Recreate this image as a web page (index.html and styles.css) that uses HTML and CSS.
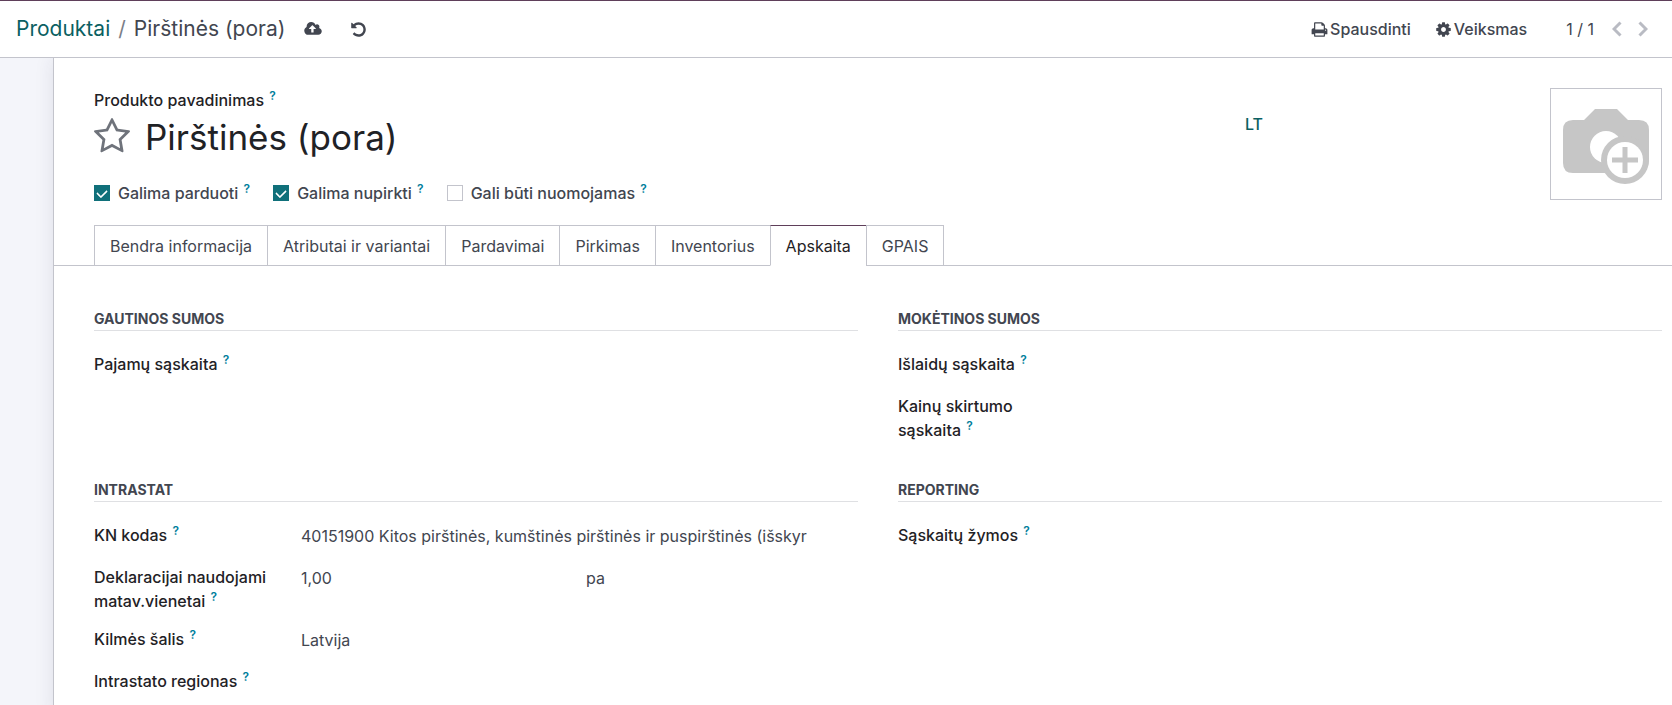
FILE: index.html
```html
<!DOCTYPE html>
<html lang="lt">
<head>
<meta charset="utf-8">
<meta name="viewport" content="width=device-width, initial-scale=1">
<title>Pirštinės (pora)</title>
<link rel="stylesheet" href="styles.css">
</head>
<body>
<header class="control-panel">
  <nav class="breadcrumb">
    <a href="#">Produktai</a>
    <span class="separator">/</span>
    <span>Pirštinės (pora)</span>
  </nav>
  <div class="record-status">
    <button type="button" class="icon-button" aria-label="Išsaugoti">
      <svg class="icon-cloud" viewBox="-64 128 1920 1536"><path d="M1216 864q0-14-9-23l-352-352q-9-9-23-9t-23 9l-351 351q-10 12-10 24 0 14 9 23t23 9h224v352q0 13 9.500 22.500t22.500 9.500h192q13 0 22.500-9.500t9.500-22.500v-352h224q13 0 22.500-9.500t9.500-22.500zm640 288q0 159-112.500 271.500t-271.500 112.500h-1088q-185 0-316.500-131.500t-131.500-316.500q0-130 70-240t188-165q-2-30-2-43 0-212 150-362t362-150q156 0 285.500 87t188.500 231q71-62 166-62 106 0 181 75t75 181q0 76-41 138 130 31 213.500 135.500t83.500 238.500z"/></svg>
    </button>
    <button type="button" class="icon-button" aria-label="Atmesti">
      <svg class="icon" viewBox="0 0 1792 1792"><path d="M1664 896q0 156-61 298t-164 245-245 164-298 61q-172 0-327-72.500t-264-204.500q-7-10-6.500-22.500t8.500-20.500l137-138q10-9 25-9 16 2 23 12 73 95 179 147t225 52q104 0 198.500-40.500t163.500-109.500 109.500-163.500 40.500-198.500-40.500-198.500-109.500-163.500-163.500-109.500-198.500-40.500q-98 0-188 35.500t-160 101.500l137 138q31 30 14 69-17 40-59 40h-448q-26 0-45-19t-19-45v-448q0-42 40-59 39-17 69 14l130 129q107-101 244.500-156.500t284.500-55.500q156 0 298 61t245 164 164 245 61 298z"/></svg>
    </button>
  </div>
  <div class="actions">
    <button type="button" class="action">
      <svg class="icon" viewBox="0 0 1792 1792"><path d="M448 1536h896v-256h-896v256zm0-640h896v-384h-160q-40 0-68-28t-28-68v-160h-640v640zm1152 64q0-26-19-45t-45-19-45 19-19 45 19 45 45 19 45-19 19-45zm128 0v416q0 13-9.500 22.500t-22.500 9.500h-224v160q0 40-28 68t-68 28h-960q-40 0-68-28t-28-68v-160h-224q-13 0-22.500-9.500t-9.500-22.500v-416q0-79 56.500-135.500t135.500-56.500h64v-544q0-40 28-68t68-28h672q40 0 88 20t76 48l152 152q28 28 48 76t20 88v256h64q79 0 135.500 56.500t56.500 135.500z"/></svg>
      Spausdinti
    </button>
    <button type="button" class="action">
      <svg class="icon" viewBox="0 0 1792 1792"><path d="M1152 896q0-106-75-181t-181-75-181 75-75 181 75 181 181 75 181-75 75-181zm512-109v222q0 12-8 23t-20 13l-185 28q-19 54-39 91 35 50 107 138 10 12 10 25t-9 23q-27 37-99 108t-94 71q-12 0-26-9l-138-108q-44 23-91 38-16 136-29 186-7 28-36 28h-222q-14 0-24.500-8.500t-11.500-21.500l-28-184q-49-16-90-37l-141 107q-10 9-25 9-14 0-25-11-126-114-165-168-7-10-7-23 0-12 8-23 15-21 51-66.500t54-70.500q-27-50-41-99l-183-27q-13-2-21-12.500t-8-23.500v-222q0-12 8-23t19-13l186-28q14-46 39-92-40-57-107-138-10-12-10-24 0-10 9-23 26-36 98.500-107.500t94.500-71.500q13 0 26 10l138 107q44-23 91-38 16-136 29-186 7-28 36-28h222q14 0 24.500 8.500t11.500 21.500l28 184q49 16 90 37l142-107q9-9 24-9 13 0 25 10 129 119 165 170 7 8 7 22 0 12-8 23-15 21-51 66.500t-54 70.500q26 50 41 98l183 28q13 2 21 12.500t8 23.500z"/></svg>
      Veiksmas
    </button>
  </div>
  <div class="pager">
    <span class="pager-count">1 / 1</span>
    <button type="button" class="pager-button" aria-label="Ankstesnis"><svg class="chevron" viewBox="0 0 10 16"><path d="M8.500 1.500 2 8l6.500 6.500"/></svg></button>
    <button type="button" class="pager-button" aria-label="Kitas"><svg class="chevron" viewBox="0 0 10 16"><path d="M1.500 1.500 8 8l-6.500 6.500"/></svg></button>
  </div>
</header>

<main class="view">
  <form class="sheet">
    <div class="product-header">
      <div class="product-title">
        <label class="label" for="name">Produkto pavadinimas <sup class="help">?</sup></label>
        <div class="title-row">
          <button type="button" class="favorite" aria-label="Mėgstamas">
            <svg class="star" viewBox="64 64 1664 1600"><path d="M1201 1004l306-297-422-62-189-382-189 382-422 62 306 297-73 421 378-199 377 199zm527-357q0 22-26 48l-363 354 86 500q1 7 1 20 0 50-41 50-19 0-40-12l-449-236-449 236q-22 12-40 12-21 0-31.500-14.500t-10.500-35.500q0-6 2-20l86-500-364-354q-25-27-25-48 0-37 56-46l502-73 225-455q19-41 49-41t49 41l225 455 502 73q56 9 56 46z"/></svg>
          </button>
          <input class="title-input" id="name" type="text" value="Pirštinės (pora)">
          <button type="button" class="translate">LT</button>
        </div>
        <div class="options">
          <div class="option"><input class="checkbox" type="checkbox" id="sale" checked><label for="sale">Galima parduoti <sup class="help">?</sup></label></div>
          <div class="option"><input class="checkbox" type="checkbox" id="purchase" checked><label for="purchase">Galima nupirkti <sup class="help">?</sup></label></div>
          <div class="option"><input class="checkbox" type="checkbox" id="rent"><label for="rent">Gali būti nuomojamas <sup class="help">?</sup></label></div>
        </div>
      </div>
      <button type="button" class="photo" aria-label="Įkelti nuotrauką">
        <svg viewBox="0 0 86 76">
          <path fill="#c6c6c6" d="M32 0H54L65 11H76Q86 11 86 21V51A24 24 0 0 1 43 64H10Q0 64 0 54V21Q0 11 10 11H21Z"/>
          <circle cx="43" cy="38" r="16" fill="#fff"/>
          <circle cx="62" cy="51" r="24" fill="#c6c6c6"/>
          <circle cx="62" cy="51" r="18" fill="#fff"/>
          <path d="M62 38V64M49 51H75" stroke="#c6c6c6" stroke-width="5"/>
        </svg>
      </button>
    </div>

    <div class="tabs" role="tablist">
      <button type="button" class="tab" role="tab">Bendra informacija</button>
      <button type="button" class="tab" role="tab">Atributai ir variantai</button>
      <button type="button" class="tab" role="tab">Pardavimai</button>
      <button type="button" class="tab" role="tab">Pirkimas</button>
      <button type="button" class="tab" role="tab">Inventorius</button>
      <button type="button" class="tab active" role="tab" aria-selected="true">Apskaita</button>
      <button type="button" class="tab" role="tab">GPAIS</button>
    </div>

    <div class="groups">
      <section class="group">
        <h2>Gautinos sumos</h2>
        <div class="field"><label class="label" for="income">Pajamų sąskaita <sup class="help">?</sup></label><input class="value" id="income" type="text"></div>
      </section>
      <section class="group">
        <h2>Mokėtinos sumos</h2>
        <div class="field"><label class="label" for="expense">Išlaidų sąskaita <sup class="help">?</sup></label><input class="value" id="expense" type="text"></div>
        <div class="field"><label class="label" for="difference">Kainų skirtumo sąskaita <sup class="help">?</sup></label><input class="value" id="difference" type="text"></div>
      </section>
      <section class="group">
        <h2>Intrastat</h2>
        <div class="field"><label class="label" for="code">KN kodas <sup class="help">?</sup></label><input class="value" id="code" type="text" value="40151900 Kitos pirštinės, kumštinės pirštinės ir puspirštinės (išskyrus megztas)"></div>
        <div class="field">
          <label class="label" for="units">Deklaracijai naudojami matav.vienetai <sup class="help">?</sup></label>
          <div class="value-pair"><input class="value" id="units" type="text" value="1,00"><input class="value" type="text" value="pa" aria-label="Matavimo vienetas"></div>
        </div>
        <div class="field"><label class="label" for="country">Kilmės šalis <sup class="help">?</sup></label><input class="value" id="country" type="text" value="Latvija"></div>
        <div class="field"><label class="label" for="region">Intrastato regionas <sup class="help">?</sup></label><input class="value" id="region" type="text"></div>
      </section>
      <section class="group">
        <h2>Reporting</h2>
        <div class="field"><label class="label" for="tags">Sąskaitų žymos <sup class="help">?</sup></label><input class="value" id="tags" type="text"></div>
      </section>
    </div>
  </form>
</main>
</body>
</html>
```
FILE: styles.css
```css
* { box-sizing: border-box; }

html, body { height: 100%; }

body {
  margin: 0;
  display: flex;
  flex-direction: column;
  overflow: hidden;
  background: #f4f5fa;
  color: #424650;
  font: 16px/24px Inter, "Liberation Sans", sans-serif;
}

button, input { font: inherit; color: inherit; }

button {
  margin: 0;
  padding: 0;
  border: 0;
  background: none;
  cursor: pointer;
}

svg { display: block; fill: currentColor; }

.control-panel {
  display: flex;
  align-items: center;
  flex: none;
  height: 58px;
  padding: 0 24px 0 16px;
  border-top: 1px solid #5f3f5a;
  border-bottom: 1px solid #c3c4cc;
  background: #fff;
}

.breadcrumb {
  display: flex;
  gap: 8px;
  font-size: 21px;
  line-height: 32px;
}

.breadcrumb a { color: #0b5f62; text-decoration: none; }

.separator { color: #7b7e87; }

.record-status { display: flex; gap: 28px; margin-left: 19px; }

.icon { width: 17px; height: 17px; }

.icon-cloud { width: 18px; height: 14px; }

.icon-button { display: flex; align-items: center; }

.actions { display: flex; gap: 24px; margin-left: auto; }

.action {
  display: flex;
  align-items: center;
  gap: 2px;
  font-weight: 500;
}

.pager { display: flex; align-items: center; margin-left: 39px; }

.pager-count { margin-right: 18px; }

.pager-button { color: #b9bbc3; }

.pager-button + .pager-button { margin-left: 16px; }

.chevron {
  width: 10px;
  height: 16px;
  fill: none;
  stroke: currentColor;
  stroke-width: 3;
}

.view {
  flex: 1;
  min-height: 0;
  padding-left: 53px;
  overflow: hidden;
}

.sheet {
  min-height: 100%;
  padding: 30px 10px 0 40px;
  border-left: 1px solid #c3c4cc;
  background: #fff;
  box-shadow: 0 0 18px rgba(40, 40, 80, 0.1);
}

.product-header { display: flex; justify-content: space-between; }

.product-title { width: 75%; }

.label { color: #1f2226; font-weight: 500; }

.help {
  margin-left: 1px;
  color: #017e9c;
  font-size: 12px;
  font-weight: 600;
  line-height: 0;
}

.title-row { display: flex; height: 50px; }

.favorite { align-self: center; padding-bottom: 2px; color: #6f737b; }

.star { width: 36px; height: 36px; }

.title-input {
  flex: 1;
  min-width: 0;
  margin-left: 15px;
  padding: 0;
  border: 0;
  outline: 0;
  background: none;
  color: #1f2226;
  font-size: 35px;
  line-height: 50px;
}

.translate {
  align-self: flex-start;
  padding: 0 7px;
  color: #0b5f62;
  font-weight: 500;
}

.options { display: flex; gap: 23px; margin-top: 19px; font-weight: 500; }

.option { display: flex; align-items: center; gap: 8px; }

.checkbox {
  appearance: none;
  width: 16px;
  height: 16px;
  margin: 0;
  border: 1px solid #c3c4cc;
}

.checkbox:checked {
  display: grid;
  place-items: center;
  border-color: #10707a;
  background: #10707a;
}

.checkbox:checked::before {
  content: "";
  width: 8px;
  height: 5px;
  margin-bottom: 2px;
  border: solid #fff;
  border-width: 0 0 2px 2px;
  border-radius: 1px;
  transform: rotate(-45deg);
}

.photo {
  display: grid;
  place-items: center;
  width: 112px;
  height: 112px;
  padding-top: 5px;
  border: 1px solid #c3c4cc;
}

.photo svg { width: 86px; height: 76px; }

.tabs {
  display: flex;
  margin: 20px -10px 0 -40px;
  padding-left: 40px;
  border-bottom: 1px solid #c3c4cc;
}

.tab {
  height: 41px;
  margin-bottom: -1px;
  padding: 0 15px;
  border: 1px solid #c3c4cc;
}

.tab + .tab { margin-left: -1px; }

.tab.active {
  border-top-color: #5f3f5a;
  border-bottom-color: #fff;
  background: #fff;
  color: #1f2226;
}

.groups {
  display: grid;
  grid-template-columns: 1fr 1fr;
  gap: 37px 40px;
  padding: 42px 0 20px;
}

.group { display: flex; flex-direction: column; gap: 14px; }

.group h2 {
  margin: 0 0 7px;
  padding-bottom: 1px;
  border-bottom: 1px solid #dfe0e3;
  font-size: 14px;
  font-weight: 700;
  line-height: 21px;
  text-transform: uppercase;
}

.field {
  display: grid;
  grid-template-columns: 180px 1fr;
  column-gap: 27px;
  align-items: start;
  min-height: 28px;
  padding-right: 51px;
}

.value {
  min-width: 0;
  width: 100%;
  height: 26px;
  padding: 0;
  border: 0;
  outline: 0;
  background: none;
}

.value-pair { display: grid; grid-template-columns: 285px 1fr; }
```
